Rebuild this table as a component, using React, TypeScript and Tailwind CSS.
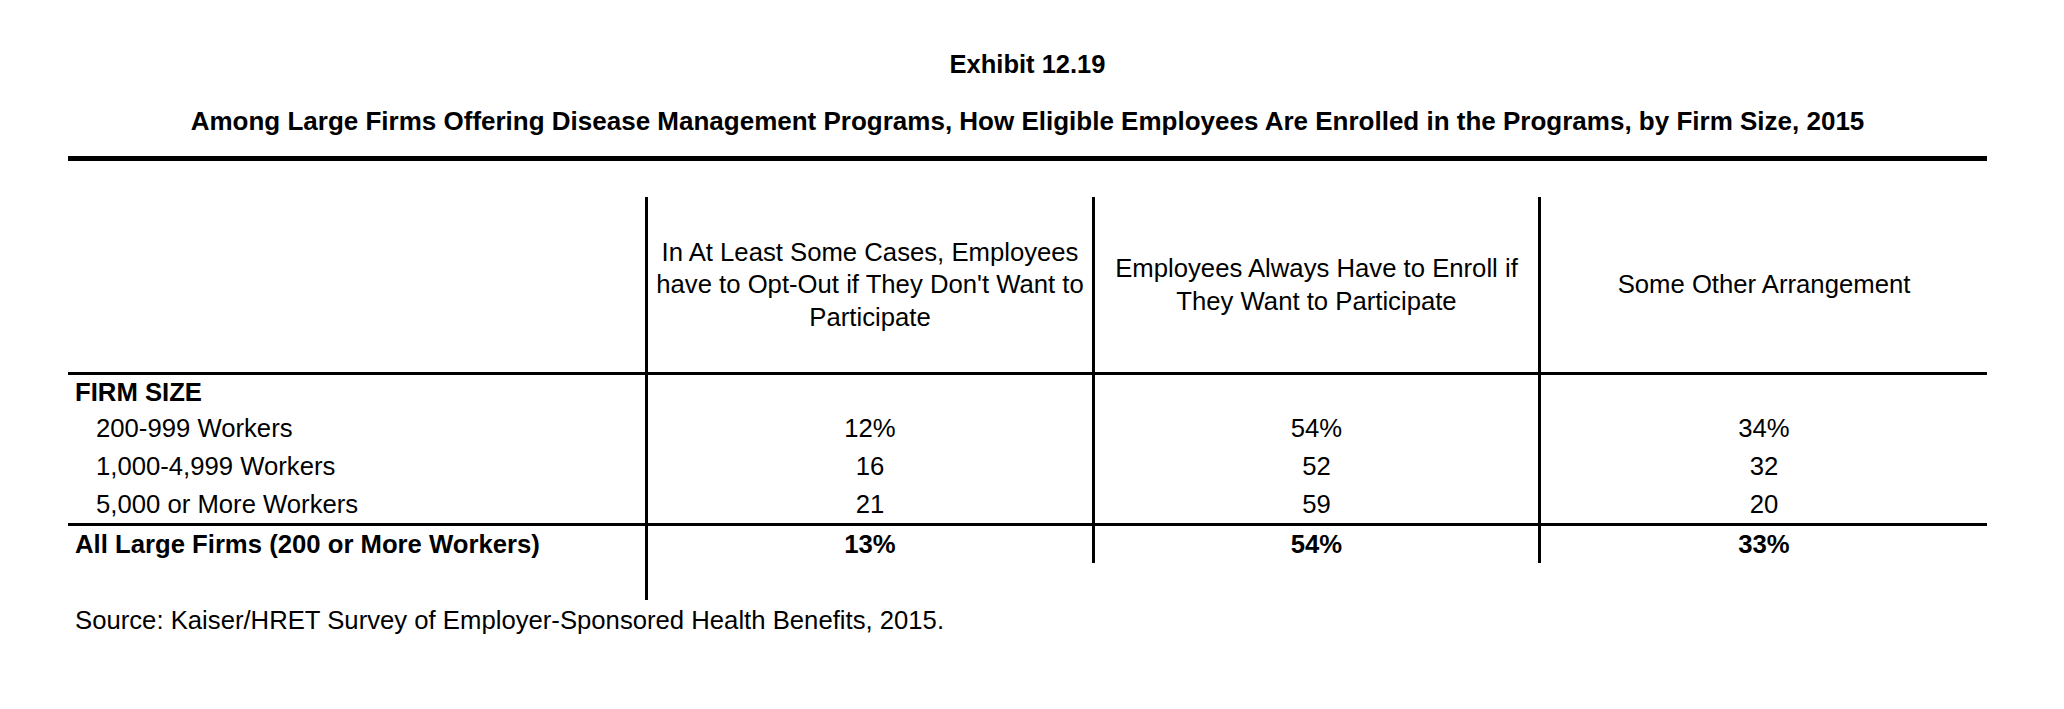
const rows = [
  { label: "200-999 Workers", a: "12%", b: "54%", c: "34%" },
  { label: "1,000-4,999 Workers", a: "16", b: "52", c: "32" },
  { label: "5,000 or More Workers", a: "21", b: "59", c: "20" },
];

function App() {
  return (
    <div
      className="min-h-screen w-full bg-white text-black"
      style={{ fontFamily: '"Liberation Sans", Arial, sans-serif' }}
    >
      <div className="ml-[68px] w-[1919px] pt-[49px] text-[25.7px]">
        <h1 className="text-center font-bold leading-[30px] text-[25.5px]">Exhibit 12.19</h1>
        <h2 className="mt-[27px] text-center font-bold leading-[30px] text-[26px]">
          Among Large Firms Offering Disease Management Programs, How Eligible Employees Are Enrolled in the Programs, by Firm Size, 2015
        </h2>
        <div className="mt-[20px] h-[5px] bg-black"></div>

        {/* header */}
        <div className="mt-[36px] grid grid-cols-[577px_447px_446px_449px] h-[178px] border-b-[3px] border-black">
          <div></div>
          <div className="border-l-[3px] border-black flex items-center justify-center text-center leading-[32.5px]">
            In At Least Some Cases, Employees
            <br />
            have to Opt-Out if They Don't Want to
            <br />
            Participate
          </div>
          <div className="border-l-[3px] border-black flex items-center justify-center text-center leading-[32.5px]">
            Employees Always Have to Enroll if
            <br />
            They Want to Participate
          </div>
          <div className="border-l-[3px] border-black flex items-center justify-center text-center leading-[32.5px]">
            Some Other Arrangement
          </div>
        </div>

        {/* body */}
        <div className="border-b-[3px] border-black">
          <div className="grid grid-cols-[577px_447px_446px_449px] h-[34px] leading-[34px]">
            <div className="pl-[7px] font-bold">FIRM SIZE</div>
            <div className="border-l-[3px] border-black"></div>
            <div className="border-l-[3px] border-black"></div>
            <div className="border-l-[3px] border-black"></div>
          </div>
          {rows.map((r) => (
            <div
              key={r.label}
              className="grid grid-cols-[577px_447px_446px_449px] h-[38px] leading-[38px]"
            >
              <div className="pl-[28px]">{r.label}</div>
              <div className="border-l-[3px] border-black text-center">{r.a}</div>
              <div className="border-l-[3px] border-black text-center">{r.b}</div>
              <div className="border-l-[3px] border-black text-center">{r.c}</div>
            </div>
          ))}
        </div>
        <div className="grid grid-cols-[577px_447px_446px_449px] h-[37px] leading-[37px] font-bold">
          <div className="pl-[7px]">All Large Firms (200 or More Workers)</div>
          <div className="border-l-[3px] border-black text-center">13%</div>
          <div className="border-l-[3px] border-black text-center">54%</div>
          <div className="border-l-[3px] border-black text-center">33%</div>
        </div>
        <div className="grid grid-cols-[577px_447px_446px_449px] h-[37px]">
          <div></div>
          <div className="border-l-[3px] border-black"></div>
        </div>

        <p className="pl-[7px] mt-[1px] leading-[38px]">
          Source: Kaiser/HRET Survey of Employer-Sponsored Health Benefits, 2015.
        </p>
      </div>
    </div>
  );
}

export default App;
